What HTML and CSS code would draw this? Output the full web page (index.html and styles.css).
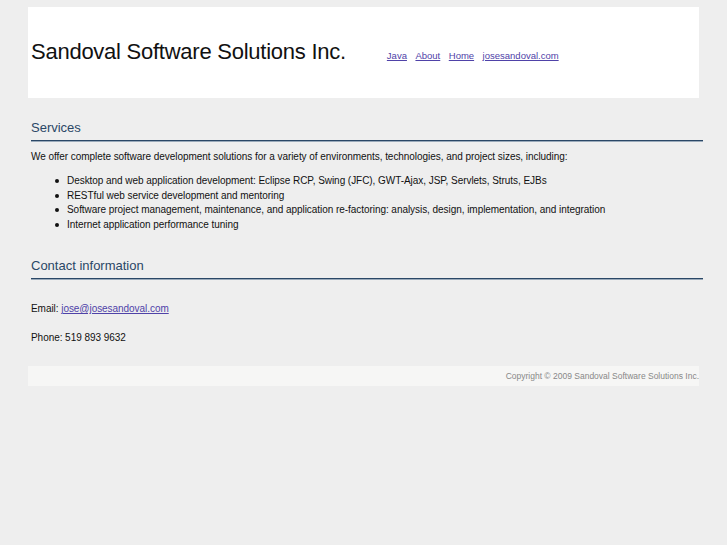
FILE: index.html
```html
<!DOCTYPE html>
<html>
<head>
<meta charset="utf-8">
<link rel="stylesheet" href="styles.css">
</head>
<body>
<div class="page">
  <header class="header">
    <h1 class="title">Sandoval Software Solutions Inc.</h1>
    <nav class="nav">
      <a href="#">Java</a>
      <a href="#">About</a>
      <a href="#">Home</a>
      <a href="#">josesandoval.com</a>
    </nav>
  </header>

  <section class="section">
    <h2 class="heading">Services</h2>
    <p class="text">We offer complete software development solutions for a variety of environments, technologies, and project sizes, including:</p>
    <ul class="list">
      <li>Desktop and web application development: Eclipse RCP, Swing (JFC), GWT-Ajax, JSP, Servlets, Struts, EJBs</li>
      <li>RESTful web service development and mentoring</li>
      <li>Software project management, maintenance, and application re-factoring: analysis, design, implementation, and integration</li>
      <li>Internet application performance tuning</li>
    </ul>
  </section>

  <section class="section contact">
    <h2 class="heading">Contact information</h2>
    <p class="text email">Email: <a href="#">jose@josesandoval.com</a></p>
    <p class="text phone">Phone: 519 893 9632</p>
  </section>

  <footer class="footer">Copyright © 2009 Sandoval Software Solutions Inc.</footer>
</div>
</body>
</html>
```
FILE: styles.css
```css
html, body {
  margin: 0;
  padding: 0;
  background: #eeeeee;
}
body {
  font-family: "Liberation Sans", Arial, sans-serif;
  color: #111;
  font-size: 10px;
  letter-spacing: -0.05px;
}
.page {
  padding: 7px 24px 0 28px;
}
.header {
  background: #ffffff;
  width: 671px;
  height: 91px;
  display: flex;
  align-items: center;
}
.title {
  margin: 0 0 2px 3px;
  font-size: 22px;
  font-weight: normal;
  color: #111;
  letter-spacing: -0.25px;
}
.nav {
  margin-left: 41px;
  margin-top: 5px;
  display: flex;
  gap: 8.5px;
  font-size: 9.5px;
  letter-spacing: 0;
}
.nav a, .email a {
  color: #4f42a8;
}
.section {
  padding-left: 3px;
}
.heading {
  margin: 0;
  padding-top: 22px;
  padding-bottom: 5px;
  font-size: 13px;
  font-weight: normal;
  color: #2a4766;
  letter-spacing: 0;
  border-bottom: 1px solid #2a4766;
  box-shadow: 0 1px 0 #9aaaba;
}
.text {
  margin: 9px 0 0 0;
  line-height: 14px;
}
.list {
  margin: 10px 0 0 0;
  padding-left: 36px;
  line-height: 14.6px;
  list-style: none;
}
.list li {
  position: relative;
}
.list li::before {
  content: "";
  position: absolute;
  left: -12px;
  top: 5px;
  width: 4px;
  height: 4px;
  border-radius: 50%;
  background: #111;
}
.contact .heading {
  padding-top: 26px;
}
.email {
  margin-top: 23px;
}
.phone {
  margin-top: 15px;
}
.footer {
  margin-top: 21px;
  width: 671px;
  height: 20px;
  box-sizing: border-box;
  background: #f6f6f5;
  color: #888;
  font-size: 8.5px;
  letter-spacing: 0;
  line-height: 20px;
  text-align: right;
}
```
